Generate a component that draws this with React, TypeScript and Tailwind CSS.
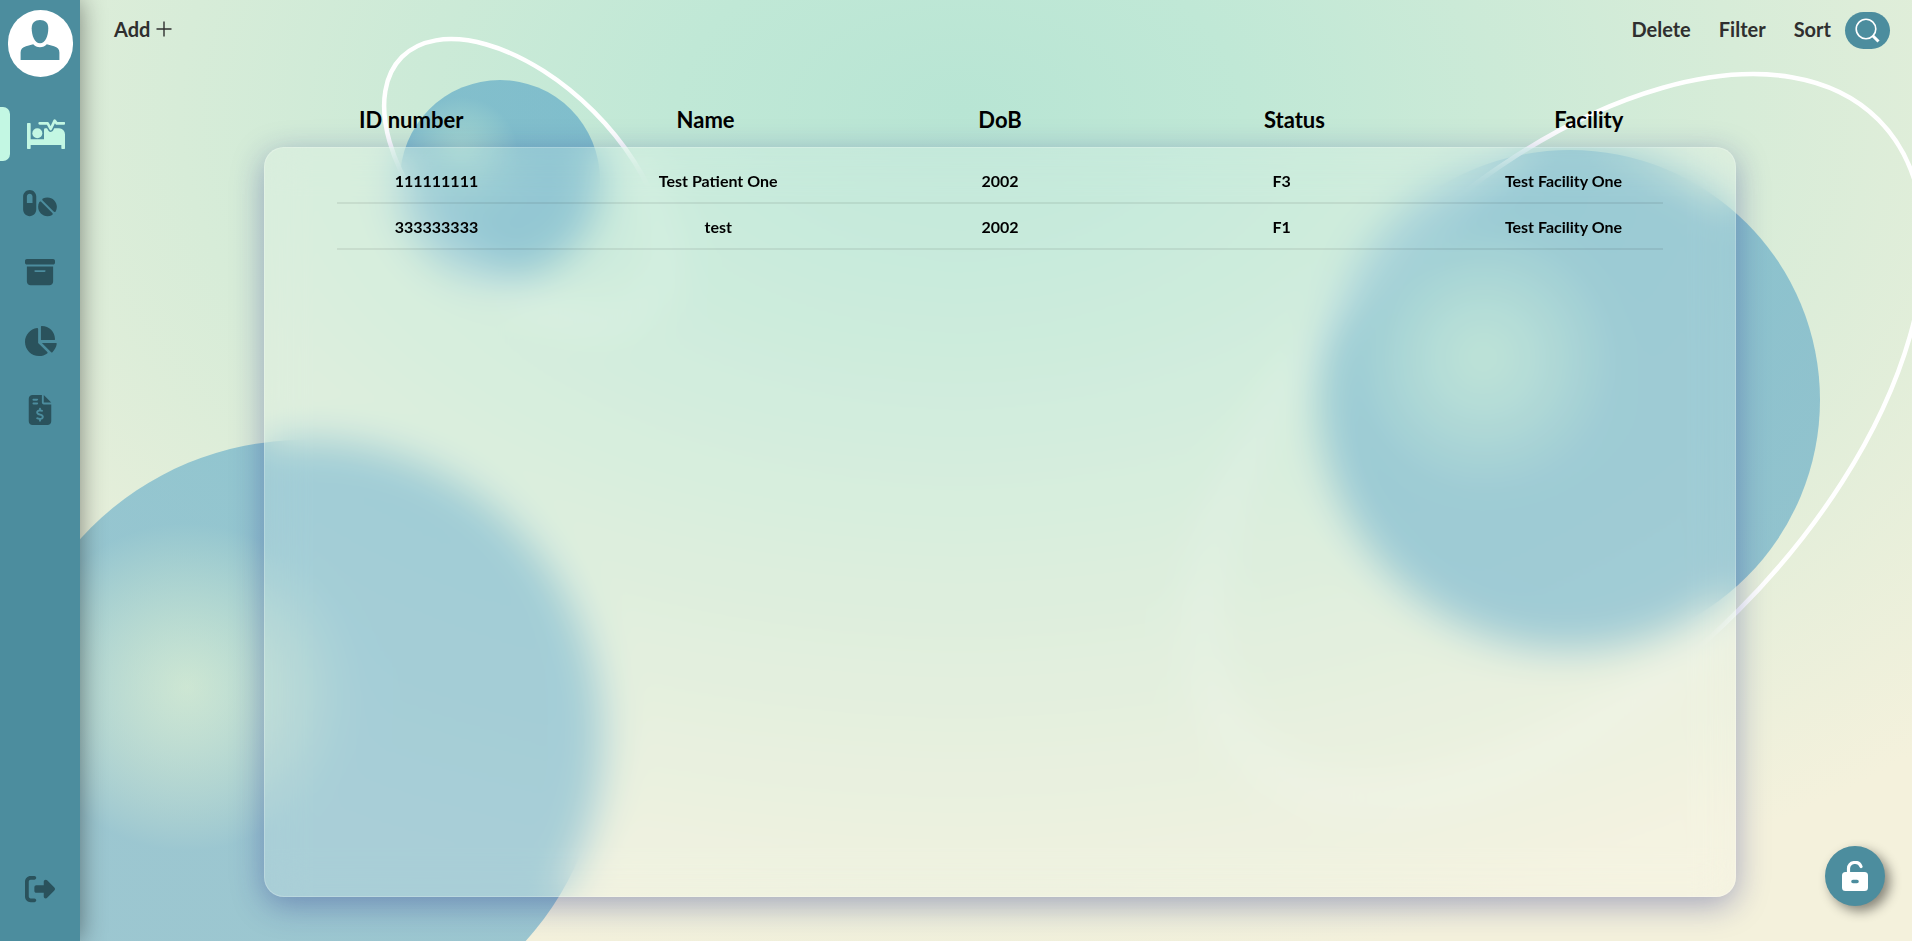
import { FaPills, FaBoxArchive, FaChartPie, FaFileInvoiceDollar, FaRightFromBracket } from "react-icons/fa6";

const columns = ["ID number", "Name", "DoB", "Status", "Facility"];

const patients = [
  ["111111111", "Test Patient One", "2002", "F3", "Test Facility One"],
  ["333333333", "test", "2002", "F1", "Test Facility One"],
];

const links = [
  { label: "Medication", Icon: FaPills, size: "h-[30px] w-[34px]" },
  { label: "Archive", Icon: FaBoxArchive, size: "h-[30px] w-[30px]" },
  { label: "Reports", Icon: FaChartPie, size: "h-[30px] w-[34px]" },
  { label: "Billing", Icon: FaFileInvoiceDollar, size: "h-[30px] w-[30px]" },
];

function Backdrop() {
  return (
    <svg
      className="absolute inset-0 h-full w-full"
      viewBox="0 0 1912 941"
      preserveAspectRatio="xMidYMid slice"
      aria-hidden="true"
    >
      <defs>
        <radialGradient id="sky" gradientUnits="userSpaceOnUse" cx="0" cy="0" r="1" gradientTransform="translate(960 110) scale(1420 870)">
          <stop offset="0" stopColor="#b8e5d4" />
          <stop offset="0.2" stopColor="#c0e8d6" />
          <stop offset="0.55" stopColor="#d7ecd8" />
          <stop offset="1" stopColor="#f4f1dc" />
        </radialGradient>
        <radialGradient id="ballLeft" gradientUnits="userSpaceOnUse" cx="187" cy="687" r="164">
          <stop offset="0" stopColor="#a0d8c8" stopOpacity="0.4" />
          <stop offset="1" stopColor="#5ca8c8" stopOpacity="0.58" />
        </radialGradient>
        <radialGradient id="ballRight" gradientUnits="userSpaceOnUse" cx="1482" cy="356" r="138">
          <stop offset="0" stopColor="#94d4ca" stopOpacity="0.45" />
          <stop offset="1" stopColor="#5aa6c6" stopOpacity="0.6" />
        </radialGradient>
        <radialGradient id="ballSmall" gradientUnits="userSpaceOnUse" cx="462" cy="153" r="56">
          <stop offset="0" stopColor="#80c4c8" stopOpacity="0.5" />
          <stop offset="1" stopColor="#5aa6c6" stopOpacity="0.64" />
        </radialGradient>
      </defs>
      <rect width="1912" height="941" fill="url(#sky)" />
      <circle cx="303" cy="740" r="300" fill="url(#ballLeft)" />
      <circle cx="1570" cy="400" r="250" fill="url(#ballRight)" />
      <circle cx="500" cy="180" r="100" fill="url(#ballSmall)" />
      <g fill="none" stroke="#fff" strokeWidth="4.500">
        <ellipse cx="525" cy="180" rx="174" ry="97" transform="rotate(45 525 180)" />
        <ellipse cx="1563" cy="435" rx="446" ry="248" transform="rotate(-45 1563 435)" />
      </g>
    </svg>
  );
}

function BedPulse() {
  return (
    <svg viewBox="0 0 114 90" className="h-[30px] w-[38px]" fill="currentColor" aria-hidden="true">
      <path d="M2 12h7a2 2 0 0 1 2 2v47h40V32a4 4 0 0 1 4-4h41a18 18 0 0 1 18 18v42a2 2 0 0 1-2 2h-7a2 2 0 0 1-2-2V78H11v10a2 2 0 0 1-2 2H2a2 2 0 0 1-2-2V14a2 2 0 0 1 2-2z" />
      <circle cx="31" cy="43" r="15" />
      <path d="M38 13h24l9 17 12-25 6 8h22" fill="none" className="stroke-[#4c8d9e]" strokeWidth="17" strokeLinejoin="round" />
      <path d="M38 13h24l9 17 12-25 6 8h22" fill="none" stroke="currentColor" strokeWidth="8" strokeLinejoin="round" strokeLinecap="round" />
    </svg>
  );
}

function Sidebar() {
  return (
    <nav className="relative z-10 flex w-20 shrink-0 flex-col items-center bg-[#4c8d9e] text-[#2a525c] shadow-[0_0_24px_rgba(0,0,0,0.45)]">
      <button aria-label="Profile" className="mt-[10px] flex h-[67px] w-[65px] items-center justify-center rounded-full bg-white pb-2">
        <svg viewBox="0 0 40 42" className="h-[42px] w-10 fill-[#4c8d9e]" aria-hidden="true">
          <path d="M20 1c5 0 8.300 2.700 8.300 8.200 0 7.500-2.900 15-8.300 15s-8.300-7.500-8.300-15C11.700 3.700 15 1 20 1z" />
          <path d="M.600 41V33.500C.600 30 2.500 28.500 6 27.300L13.200 25.200c1.700 2 4 3 6.800 3s5.100-1 6.800-3L34 27.300c3.500 1.200 5.400 2.700 5.400 6.200V41z" />
        </svg>
      </button>
      <div className="mt-[30px] flex h-[54px] w-full items-center">
        <span className="h-full w-[10px] rounded-r-[7px] bg-[#c3f7e3]" />
        <a href="#patients" aria-label="Patients" aria-current="page" className="ml-[17px] text-[#c3f7e3]">
          <BedPulse />
        </a>
      </div>
      <div className="mt-[27px] flex flex-col items-center gap-[39px]">
        {links.map(({ label, Icon, size }) => (
          <a key={label} href={"#" + label.toLowerCase()} aria-label={label}>
            <Icon className={size} />
          </a>
        ))}
      </div>
      <a href="#logout" aria-label="Log out" className="mt-auto mb-[37px]">
        <FaRightFromBracket className="h-[30px] w-[30px]" />
      </a>
    </nav>
  );
}

function Toolbar() {
  return (
    <header className="flex h-[60px] items-center pr-[22px] pl-[34px] text-[20px] font-bold text-[#2f2f2f]">
      <button className="flex items-center gap-[6px] pb-[2px]">
        Add
        <svg viewBox="0 0 16 16" className="h-4 w-4" fill="none" stroke="currentColor" strokeWidth="1.400" aria-hidden="true">
          <path d="M8 0.500v15M0.500 8h15" />
        </svg>
      </button>
      <div className="ml-auto flex items-center gap-7 pb-[2px]">
        <button>Delete</button>
        <button>Filter</button>
        <button>Sort</button>
      </div>
      <button aria-label="Search" className="ml-[14px] flex h-[37px] w-[45px] items-center justify-center rounded-[20px] bg-[#4c8d9e] text-white">
        <svg viewBox="0 0 25 25" className="h-[25px] w-[25px]" fill="none" stroke="currentColor" aria-hidden="true">
          <circle cx="11" cy="11" r="9.800" strokeWidth="1.600" />
          <path d="M17.500 17.500l6 6" strokeWidth="3" />
        </svg>
      </button>
    </header>
  );
}

export default function App() {
  return (
    <div className="relative flex min-h-screen overflow-hidden font-['Lato','Open_Sans',sans-serif]">
      <Backdrop />
      <Sidebar />
      <main className="relative flex min-w-0 flex-1 flex-col">
        <Toolbar />
        <table className="mr-44 mb-11 ml-46 flex flex-1 flex-col text-center text-black">
          <thead className="block">
            <tr className="flex h-[87px] items-center pt-[33px]">
              {columns.map((name) => (
                <th key={name} scope="col" className="flex-1 text-[22px] leading-[30px] font-bold">
                  {name}
                </th>
              ))}
            </tr>
          </thead>
          <tbody className="block flex-1 rounded-[20px] border border-white/20 bg-white/15 pt-[10px] shadow-[0_8px_32px_rgba(31,38,135,0.37)] backdrop-blur-[20px]">
            {patients.map((patient) => (
              <tr key={patient[0]} className="mx-[72px] flex h-[46px] items-center justify-between border-b-2 border-black/[0.07]">
                {patient.map((value, i) => (
                  <td key={i} className="w-[15%] pt-[2px] text-[16px] leading-6 font-bold whitespace-nowrap">
                    {value}
                  </td>
                ))}
              </tr>
            ))}
          </tbody>
        </table>
      </main>
      <button
        aria-label="Unlock"
        className="absolute right-[27px] bottom-[35px] z-10 flex h-[60px] w-[60px] items-center justify-center rounded-full bg-[#4c8d9e] shadow-[5px_5px_12px_rgba(0,0,0,0.45)]"
      >
        <svg viewBox="0 0 26 30" className="h-[30px] w-[26px]" aria-hidden="true">
          <path d="M6.500 13V7.500a6.500 6.500 0 0 1 12.500-2" fill="none" stroke="#fff" strokeWidth="3.200" strokeLinecap="round" />
          <path fillRule="evenodd" fill="#fff" d="M3.500 11h19A3.500 3.500 0 0 1 26 14.500v12a3.500 3.500 0 0 1-3.500 3.500h-19A3.500 3.500 0 0 1 0 26.500v-12A3.500 3.500 0 0 1 3.500 11zM11 18.700a1.800 1.800 0 0 0 0 3.600h4a1.800 1.800 0 0 0 0-3.600z" />
        </svg>
      </button>
    </div>
  );
}
